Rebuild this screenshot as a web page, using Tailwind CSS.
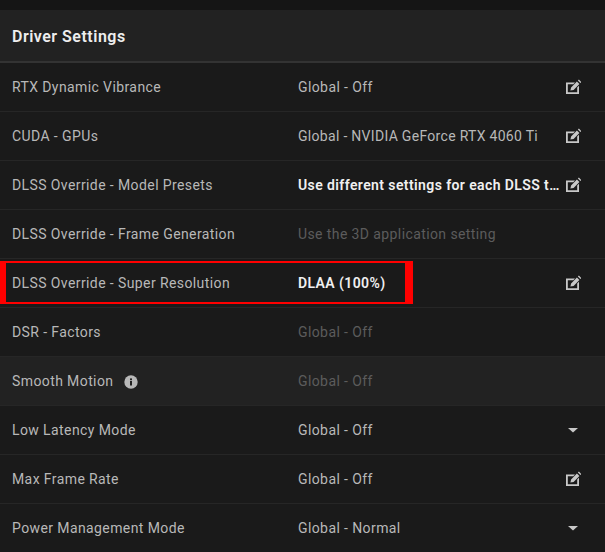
<!DOCTYPE html>
<html lang="en">
<head>
    <meta charset="UTF-8">
    <meta name="viewport" content="width=device-width, initial-scale=1.0">
    <title>Driver Settings</title>
    <script src="https://cdn.jsdelivr.net/npm/@tailwindcss/browser@4"></script>
</head>
<body class="w-[605px] h-[552px] overflow-hidden bg-[#151515] font-['Roboto','Noto_Sans',sans-serif] text-[14px] tracking-[0.4px]">

    <div class="relative pt-[10px]">
        <header class="h-[53px] px-3 pt-[3px] flex items-center bg-[#222222] border-b-2 border-[#333333]">
            <h3 class="text-[16px] font-semibold tracking-[0.5px] text-[#eeeeee]">Driver Settings</h3>
        </header>

        <div class="h-[49px] pl-3 pr-[24px] pt-[1px] flex items-center bg-[#1a1a1a] border-b border-[#262626]">
            <span class="w-[286px] text-[#b8b8b8]">RTX Dynamic Vibrance</span>
            <span class="flex-1 text-[#b8b8b8]">Global - Off</span>
            <svg class="w-4 h-4 mb-[2px]" viewBox="0 0 16 16"><path fill="#c8c8c8" d="M1 3.5h9L8.2 5.3H2.8v7.9h9.4V8.5L14 6.7V15H1zM11.9 2.6l2.5 2.5-5.8 5.8-3.2.7.7-3.2zM12.9 1.6l1-1 2.5 2.5-1 1z"/></svg>
        </div>
        <div class="h-[49px] pl-3 pr-[24px] pt-[1px] flex items-center bg-[#1a1a1a] border-b border-[#262626]">
            <span class="w-[286px] text-[#b8b8b8]">CUDA - GPUs</span>
            <span class="flex-1 tracking-[0.3px] text-[#b8b8b8]">Global - NVIDIA GeForce RTX 4060 Ti</span>
            <svg class="w-4 h-4 mb-[2px]" viewBox="0 0 16 16"><path fill="#c8c8c8" d="M1 3.5h9L8.2 5.3H2.8v7.9h9.4V8.5L14 6.7V15H1zM11.9 2.6l2.5 2.5-5.8 5.8-3.2.7.7-3.2zM12.9 1.6l1-1 2.5 2.5-1 1z"/></svg>
        </div>
        <div class="h-[49px] pl-3 pr-[24px] pt-[1px] flex items-center bg-[#1a1a1a] border-b border-[#262626]">
            <span class="w-[286px] text-[#b8b8b8]">DLSS Override - Model Presets</span>
            <span class="w-[263px] mr-[4px] truncate font-semibold text-[#f0f0f0]">Use different settings for each DLSS technology</span>
            <svg class="w-4 h-4 mb-[2px]" viewBox="0 0 16 16"><path fill="#c8c8c8" d="M1 3.5h9L8.2 5.3H2.8v7.9h9.4V8.5L14 6.7V15H1zM11.9 2.6l2.5 2.5-5.8 5.8-3.2.7.7-3.2zM12.9 1.6l1-1 2.5 2.5-1 1z"/></svg>
        </div>
        <div class="h-[49px] pl-3 pr-[24px] pt-[1px] flex items-center bg-[#1a1a1a] border-b border-[#262626]">
            <span class="w-[286px] text-[#b8b8b8]">DLSS Override - Frame Generation</span>
            <span class="flex-1 text-[#5c5c5c]">Use the 3D application setting</span>
        </div>
        <div class="h-[49px] pl-3 pr-[24px] pt-[1px] flex items-center bg-[#1a1a1a] border-b border-[#262626]">
            <span class="w-[286px] text-[#b8b8b8]">DLSS Override - Super Resolution</span>
            <span class="flex-1 font-semibold text-[#f0f0f0]">DLAA (100%)</span>
            <svg class="w-4 h-4 mb-[2px]" viewBox="0 0 16 16"><path fill="#c8c8c8" d="M1 3.5h9L8.2 5.3H2.8v7.9h9.4V8.5L14 6.7V15H1zM11.9 2.6l2.5 2.5-5.8 5.8-3.2.7.7-3.2zM12.9 1.6l1-1 2.5 2.5-1 1z"/></svg>
        </div>
        <div class="h-[49px] pl-3 pr-[24px] pt-[1px] flex items-center bg-[#1a1a1a] border-b border-[#262626]">
            <span class="w-[286px] text-[#b8b8b8]">DSR - Factors</span>
            <span class="flex-1 text-[#5c5c5c]">Global - Off</span>
        </div>
        <div class="h-[49px] pl-3 pr-[24px] pt-[1px] flex items-center bg-[#222222] border-b border-[#262626]">
            <span class="w-[286px] flex items-center gap-[11px] text-[#b8b8b8]">
                Smooth Motion
                <svg class="w-[14px] h-[14px]" viewBox="0 0 14 14"><circle cx="7" cy="7" r="6.7" fill="#b8b8b8"/><rect x="6" y="6" width="2" height="4.5" fill="#222222"/><rect x="6" y="3.4" width="2" height="1.8" fill="#222222"/></svg>
            </span>
            <span class="flex-1 text-[#5c5c5c]">Global - Off</span>
        </div>
        <div class="h-[49px] pl-3 pr-[24px] pt-[1px] flex items-center bg-[#1a1a1a] border-b border-[#262626]">
            <span class="w-[286px] text-[#b8b8b8]">Low Latency Mode</span>
            <span class="flex-1 text-[#b8b8b8]">Global - Off</span>
            <svg class="w-4 h-4 mb-[2px]" viewBox="0 0 16 16"><path fill="#c8c8c8" d="M3 6h10l-5 4.5z"/></svg>
        </div>
        <div class="h-[49px] pl-3 pr-[24px] pt-[1px] flex items-center bg-[#1a1a1a] border-b border-[#262626]">
            <span class="w-[286px] text-[#b8b8b8]">Max Frame Rate</span>
            <span class="flex-1 text-[#b8b8b8]">Global - Off</span>
            <svg class="w-4 h-4 mb-[2px]" viewBox="0 0 16 16"><path fill="#c8c8c8" d="M1 3.5h9L8.2 5.3H2.8v7.9h9.4V8.5L14 6.7V15H1zM11.9 2.6l2.5 2.5-5.8 5.8-3.2.7.7-3.2zM12.9 1.6l1-1 2.5 2.5-1 1z"/></svg>
        </div>
        <div class="h-[49px] pl-3 pr-[24px] pt-[1px] flex items-center bg-[#1a1a1a] border-b border-[#262626]">
            <span class="w-[286px] text-[#b8b8b8]">Power Management Mode</span>
            <span class="flex-1 text-[#b8b8b8]">Global - Normal</span>
            <svg class="w-4 h-4 mb-[2px]" viewBox="0 0 16 16"><path fill="#c8c8c8" d="M3 6h10l-5 4.5z"/></svg>
        </div>

        <!-- red highlight drawn over the row -->
        <div class="absolute left-0 top-[261px] w-[413px] h-[43px] border-solid border-y-2 border-l-[6px] border-r-[8px] border-[#ff0000]"></div>
    </div>

</body>
</html>
